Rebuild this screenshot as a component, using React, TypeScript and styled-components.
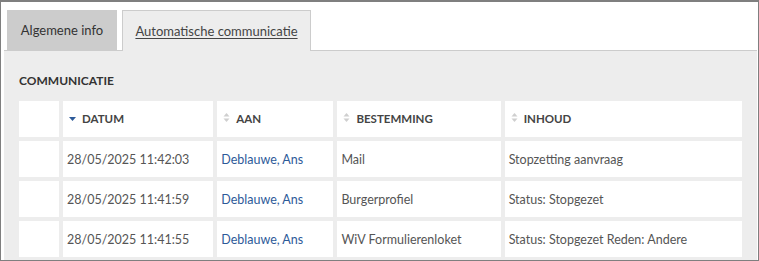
import React from "react";
import styled, { createGlobalStyle } from "styled-components";

const Global = createGlobalStyle`
  html, body { margin: 0; padding: 0; background: #ffffff; }
  body { font-family: Lato, "Open Sans", sans-serif; }
`;

const Frame = styled.div`
  box-sizing: border-box;
  width: 759px;
  height: 261px;
  border: 1px solid #7f7f7f;
  border-top-width: 2px;
  padding: 8px 1px 0 3px;
  overflow: hidden;
  background: #ffffff;
  display: flex;
  flex-direction: column;
`;

const TabBar = styled.div`
  display: flex;
  gap: 5px;
  padding-left: 3px;
  margin-bottom: -1px;
  position: relative;
  z-index: 1;
`;

const Tab = styled.div<{ $active?: boolean }>`
  box-sizing: border-box;
  flex: 0 0 auto;
  height: ${(p) => (p.$active ? "41px" : "40px")};
  width: ${(p) => (p.$active ? "189px" : "110px")};
  display: flex;
  align-items: center;
  justify-content: center;
  white-space: nowrap;
  font-size: 13px;
  color: ${(p) => (p.$active ? "#444444" : "#333333")};
  background: ${(p) => (p.$active ? "#ededed" : "#cccccc")};
  border: ${(p) => (p.$active ? "1px solid #cccccc" : "none")};
  border-bottom: none;
`;

const TabLabel = styled.span<{ $link?: boolean }>`
  text-decoration: ${(p) => (p.$link ? "underline" : "none")};
  text-underline-offset: 2px;
`;

const Panel = styled.div`
  flex: 1;
  background: #ededed;
  border-top: 1px solid #cccccc;
  padding: 22px 15px 0 15px;
`;

const Heading = styled.div`
  font-size: 12px;
  font-weight: 700;
  line-height: 16px;
  color: #333333;
  text-transform: uppercase;
  margin-bottom: 8px;
`;

const Table = styled.table`
  table-layout: fixed;
  border-collapse: separate;
  border-spacing: 4px;
  width: calc(100% + 8px);
  margin: 0 -4px;
`;

const HeadCell = styled.th<{ $w: number }>`
  width: ${(p) => p.$w}px;
  height: 36px;
  box-sizing: border-box;
  background: #ffffff;
  padding: 0 6px;
  text-align: left;
  font-size: 11.5px;
  font-weight: 700;
  color: #444444;
  text-transform: uppercase;
  white-space: nowrap;
`;

const HeadInner = styled.span`
  display: inline-flex;
  align-items: center;
  gap: 6px;
`;

const Cell = styled.td<{ $link?: boolean }>`
  height: 36px;
  box-sizing: border-box;
  background: #ffffff;
  padding: 0 4px;
  font-size: 12.5px;
  color: ${(p) => (p.$link ? "#2d5a99" : "#555555")};
  white-space: nowrap;
`;

const SortIcon = ({ active }: { active?: boolean }) =>
  active ? (
    <svg width="7" height="12" viewBox="0 0 7 12">
      <polygon points="0,5 7,5 3.5,9" fill="#2d5a99" />
    </svg>
  ) : (
    <svg width="7" height="12" viewBox="0 0 7 12">
      <polygon points="0.5,4.5 6.5,4.5 3.5,1" fill="#cfcfcf" />
      <polygon points="0.5,6.5 6.5,6.5 3.5,10" fill="#cfcfcf" />
    </svg>
  );

const columns = [
  { key: "blank", label: "", w: 40 },
  { key: "datum", label: "Datum", w: 150, active: true },
  { key: "aan", label: "Aan", w: 116 },
  { key: "bestemming", label: "Bestemming", w: 163 },
  { key: "inhoud", label: "Inhoud", w: 237 },
];

const rows = [
  { datum: "28/05/2025 11:42:03", aan: "Deblauwe, Ans", bestemming: "Mail", inhoud: "Stopzetting aanvraag" },
  { datum: "28/05/2025 11:41:59", aan: "Deblauwe, Ans", bestemming: "Burgerprofiel", inhoud: "Status: Stopgezet" },
  { datum: "28/05/2025 11:41:55", aan: "Deblauwe, Ans", bestemming: "WiV Formulierenloket", inhoud: "Status: Stopgezet Reden: Andere" },
];

export default function App() {
  return (
    <>
      <Global />
      <Frame>
        <TabBar>
          <Tab>
            <TabLabel>Algemene info</TabLabel>
          </Tab>
          <Tab $active>
            <TabLabel $link>Automatische communicatie</TabLabel>
          </Tab>
        </TabBar>
        <Panel>
          <Heading>Communicatie</Heading>
          <Table>
            <thead>
              <tr>
                {columns.map((c) => (
                  <HeadCell key={c.key} $w={c.w}>
                    {c.label && (
                      <HeadInner>
                        <SortIcon active={c.active} />
                        {c.label}
                      </HeadInner>
                    )}
                  </HeadCell>
                ))}
              </tr>
            </thead>
            <tbody>
              {rows.map((r, i) => (
                <tr key={i}>
                  <Cell />
                  <Cell>{r.datum}</Cell>
                  <Cell $link>{r.aan}</Cell>
                  <Cell>{r.bestemming}</Cell>
                  <Cell>{r.inhoud}</Cell>
                </tr>
              ))}
            </tbody>
          </Table>
        </Panel>
      </Frame>
    </>
  );
}
